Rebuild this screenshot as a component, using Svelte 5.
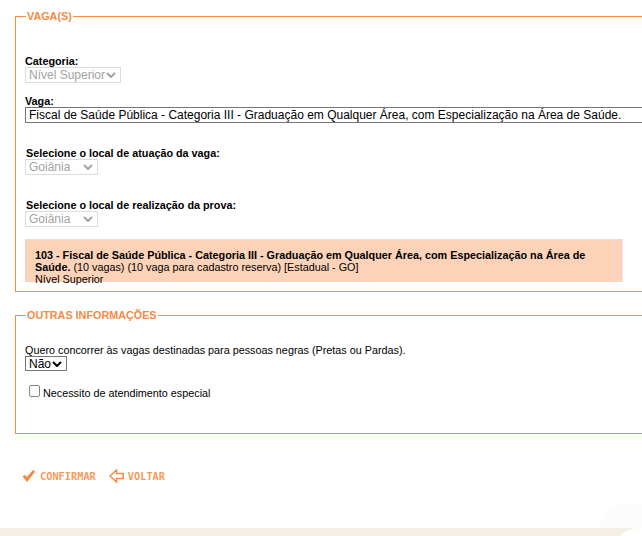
<script>
  const vagaTitulo = 'Fiscal de Saúde Pública - Categoria III - Graduação em Qualquer Área, com Especialização na Área de Saúde.'
</script>

<div class="page">
  <main>
    <fieldset class="vagas">
      <legend>VAGA(S)</legend>

      <label class="campo categoria">
        <b>Categoria:</b>
        <select disabled class="sel-categoria"><option>Nível Superior</option></select>
      </label>

      <label class="campo vaga">
        <b>Vaga:</b>
        <select class="sel-vaga"><option>{vagaTitulo}</option></select>
      </label>

      <label class="campo local atuacao">
        <b>Selecione o local de atuação da vaga:</b>
        <select disabled class="sel-local"><option>Goiânia</option></select>
      </label>

      <label class="campo local prova">
        <b>Selecione o local de realização da prova:</b>
        <select disabled class="sel-local"><option>Goiânia</option></select>
      </label>

      <div class="resumo">
        <p><b>103 - Fiscal de Saúde Pública - Categoria III - Graduação em Qualquer Área, com Especialização na Área de Saúde.</b> (10 vagas) (10 vaga para cadastro reserva) [Estadual - GO]</p>
        <p class="nivel">Nível Superior</p>
      </div>
    </fieldset>

    <fieldset class="outras">
      <legend>OUTRAS INFORMAÇÕES</legend>

      <label class="campo cotas">
        Quero concorrer às vagas destinadas para pessoas negras (Pretas ou Pardas).
        <select class="sel-cotas"><option>Não</option></select>
      </label>

      <label class="especial">
        <input type="checkbox" />
        <span>Necessito de atendimento especial</span>
      </label>
    </fieldset>

    <div class="acoes">
      <button type="button">
        <svg width="14" height="14" viewBox="0 0 14 14"><path d="M0.5 7.5l2.3-1.7 2 2.3L11 1l2.2 1.4L5.2 13z" fill="#f58a42"/></svg>
        CONFIRMAR
      </button>
      <button type="button">
        <svg width="15" height="14" viewBox="0 0 15 14"><path d="M7.5 1L1 7l6.5 6V9.6h6.7V4.4H7.5z" fill="none" stroke="#f58a42" stroke-width="1.5"/></svg>
        VOLTAR
      </button>
    </div>
  </main>

  <footer><span class="canto"></span></footer>
  <span class="onda"></span>
</div>

<style>
  :global(body) {
    margin: 0;
    background: #fff;
    overflow: hidden;
  }

  .page {
    position: relative;
    width: 642px;
    height: 536px;
    overflow: hidden;
    font-family: "Liberation Sans", Arial, sans-serif;
    font-size: 10.8px;
    color: #000;
    display: flex;
    flex-direction: column;
  }

  main {
    height: 528px;
    flex: none;
    padding: 9px 0 0 15px;
    box-sizing: border-box;
  }

  fieldset {
    margin: 0;
    width: 700px;
    box-sizing: border-box;
    min-width: 0;
    border: 1px solid #f58a42;
    padding: 0 0 0 9px;
  }

  legend {
    font-weight: bold;
    font-size: 10.8px;
    color: #f58a42;
    padding: 0 1px;
    margin-left: 1px;
    line-height: 14px;
  }

  .vagas {
    height: 283px;
  }

  .outras {
    height: 126px;
    margin-top: 16px;
  }

  .campo {
    display: block;
    line-height: 12px;
  }

  .campo b, .campo select {
    display: block;
  }

  select {
    appearance: none;
    font-family: "Liberation Sans", Arial, sans-serif;
    font-size: 12px;
    margin: 0;
    height: 16px;
    padding: 0 0 0 3px;
    border-radius: 0;
    box-sizing: border-box;
    border: 1px solid #767676;
    color: #000;
    background: #fff;
  }

  select:disabled {
    opacity: 1;
    color: #a3a3a3;
    border: 1px solid #dcdcdc;
    background: #fff url("data:image/svg+xml,%3Csvg xmlns='http://www.w3.org/2000/svg' width='10' height='6'%3E%3Cpath d='M1 1l4 4 4-4' fill='none' stroke='%23a3a3a3' stroke-width='2'/%3E%3C/svg%3E") no-repeat right 4px center;
  }

  .categoria {
    margin-top: 32px;
  }

  .sel-categoria {
    width: 96px;
  }

  .vaga {
    margin-top: 12px;
  }

  .sel-vaga {
    width: 660px;
  }

  .local {
    margin-left: 1px;
  }

  .atuacao, .prova {
    margin-top: 24px;
  }

  .sel-local {
    width: 73px;
    margin-left: -1px;
  }

  .resumo {
    margin-top: 12px;
    width: 598px;
    height: 43px;
    box-sizing: border-box;
    background: #fcd3b8;
    border-top: 1px solid #e0e0e0;
    border-right: 1px solid #e8e8e8;
    padding: 9px 10px 0 10px;
    line-height: 12px;
  }

  .resumo p {
    margin: 0;
  }

  .cotas {
    margin-top: 22px;
  }

  .sel-cotas {
    width: 42px;
    height: 15px;
    background: #fff url("data:image/svg+xml,%3Csvg xmlns='http://www.w3.org/2000/svg' width='10' height='6'%3E%3Cpath d='M1 1l4 4 4-4' fill='none' stroke='%23000' stroke-width='2'/%3E%3C/svg%3E") no-repeat right 4px center;
  }

  .especial {
    display: flex;
    align-items: flex-start;
    gap: 3px;
    margin: 14px 0 0 4px;
    line-height: 14px;
  }

  .especial input {
    appearance: none;
    margin: 0;
    width: 11px;
    height: 12px;
    box-sizing: border-box;
    border: 1px solid #858585;
    border-radius: 2px;
    background: #fff;
  }

  .especial span {
    margin-top: 1px;
  }

  .acoes {
    display: flex;
    gap: 13px;
    margin: 35px 0 0 7px;
  }

  button {
    display: flex;
    align-items: center;
    gap: 4px;
    border: 0;
    background: none;
    padding: 0;
    font-family: "DejaVu Sans Mono", monospace;
    font-weight: bold;
    font-size: 10.3px;
    color: #f79a5c;
  }

  footer {
    flex: 1;
    background: #f4f0e6;
    position: relative;
  }

  .canto {
    position: absolute;
    right: -20px;
    top: 0;
    width: 48px;
    height: 30px;
    background: #fff;
    border-radius: 24px 0 0 0;
  }

  .onda {
    position: absolute;
    right: -40px;
    bottom: 8px;
    width: 82px;
    height: 24px;
    background: #fcfcfc;
    border-radius: 70px 0 0 0;
  }
</style>
